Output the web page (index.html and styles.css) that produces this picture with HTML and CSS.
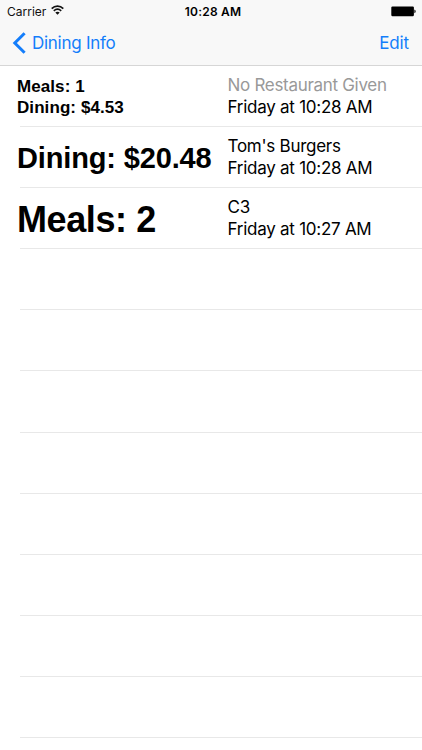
FILE: index.html
```html
<!DOCTYPE html>
<html lang="en">
<head>
    <meta charset="UTF-8">
    <meta name="viewport" content="width=device-width, initial-scale=1.0">
    <title>Dining Info</title>
    <link rel="stylesheet" href="styles.css">
</head>
<body>
    <header class="header">
        <div class="status-bar">
            <div class="carrier">
                <span>Carrier</span>
                <svg class="wifi" width="13" height="10" viewBox="0 0 13 10" fill="none" stroke="#111" stroke-width="1.7">
                    <path d="M0.7 3.6C4 0.4 9 0.4 12.3 3.6"/>
                    <path d="M2.8 5.9C5 3.9 8 3.9 10.2 5.9"/>
                    <path d="M6.5 9.7L4.3 7.4C5.5 6.4 7.5 6.4 8.7 7.4Z" fill="#111" stroke="none"/>
                </svg>
            </div>
            <span class="clock">10:28 AM</span>
            <svg class="battery" width="26" height="11" viewBox="0 0 26 11">
                <rect x="0.3" y="0.5" width="22.6" height="9.8" rx="1.2" fill="#000"/>
                <path d="M23.4 3.6C25.1 4 25.1 6.8 23.4 7.2Z" fill="#000"/>
            </svg>
        </div>
        <nav class="nav-bar">
            <a class="back" href="#">
                <svg width="14" height="22" viewBox="0 0 14 22" fill="none" stroke="#147efb" stroke-width="3">
                    <path d="M12.6 1.2L2.8 11L12.6 20.8"/>
                </svg>
                <span class="back-label">Dining Info</span>
            </a>
            <a class="edit" href="#">Edit</a>
        </nav>
    </header>

    <ul class="list">
        <li class="row">
            <div class="amount small">Meals: 1<br>Dining: $4.53</div>
            <div class="details"><span class="empty">No Restaurant Given</span><span>Friday at 10:28 AM</span></div>
        </li>
        <li class="row">
            <div class="amount medium">Dining: $20.48</div>
            <div class="details"><span>Tom's Burgers</span><span>Friday at 10:28 AM</span></div>
        </li>
        <li class="row">
            <div class="amount large">Meals: 2</div>
            <div class="details"><span>C3</span><span>Friday at 10:27 AM</span></div>
        </li>
        <li class="row"></li>
        <li class="row"></li>
        <li class="row"></li>
        <li class="row"></li>
        <li class="row"></li>
        <li class="row"></li>
        <li class="row"></li>
        <li class="row"></li>
    </ul>
</body>
</html>
```

FILE: styles.css
```css
:root {
    --tint: #147efb;
    --bar-bg: #f8f8f8;
    --bar-border: #d6d6d6;
    --separator: #e8e8e8;
    --placeholder: #999;
}

body {
    margin: 0;
    height: 750px;
    overflow: hidden;
    background: #fff;
    color: #000;
    font-family: Inter, "Liberation Sans", sans-serif;
}

.header {
    box-sizing: border-box;
    height: 66px;
    background: var(--bar-bg);
    border-bottom: 1px solid var(--bar-border);
}

.status-bar {
    display: grid;
    grid-template-columns: 1fr auto 1fr;
    align-items: center;
    height: 22px;
    padding: 0 5px 0 7px;
    font-size: 12px;
}

.carrier {
    display: flex;
    align-items: center;
    gap: 5px;
    color: #111;
}

.wifi {
    margin-top: -2px;
}

.clock {
    padding-left: 2px;
    font-weight: 600;
    letter-spacing: 0.2px;
}

.battery {
    justify-self: end;
}

.nav-bar {
    display: flex;
    justify-content: space-between;
    align-items: center;
    height: 42px;
    padding: 0 13px 0 12px;
    font-size: 17px;
    letter-spacing: -0.27px;
}

.nav-bar a {
    color: var(--tint);
    text-decoration: none;
}

.back {
    display: flex;
    align-items: center;
    gap: 6px;
}

.nav-bar .edit {
    letter-spacing: -0.15px;
}

.list {
    margin: 0;
    padding: 0;
    list-style: none;
}

.row {
    box-sizing: border-box;
    display: flex;
    align-items: center;
    height: 61.1px;
    padding-left: 17px;
    background: linear-gradient(var(--separator), var(--separator)) 20px 100% / 100% 1px no-repeat;
}

.amount {
    width: 210.5px;
    font-family: "Liberation Sans", Arial, sans-serif;
    font-weight: bold;
    white-space: nowrap;
}

.small {
    font-size: 17px;
    line-height: 21px;
    letter-spacing: 0.08px;
}

.medium {
    padding-top: 2px;
    font-size: 29px;
    letter-spacing: -0.15px;
}

.large {
    padding-top: 2px;
    font-size: 36px;
    letter-spacing: -0.4px;
}

.details {
    display: flex;
    flex-direction: column;
    font-size: 17px;
    line-height: 21.6px;
    letter-spacing: -0.26px;
    white-space: nowrap;
}

.empty {
    color: var(--placeholder);
    letter-spacing: -0.3px;
}
```
